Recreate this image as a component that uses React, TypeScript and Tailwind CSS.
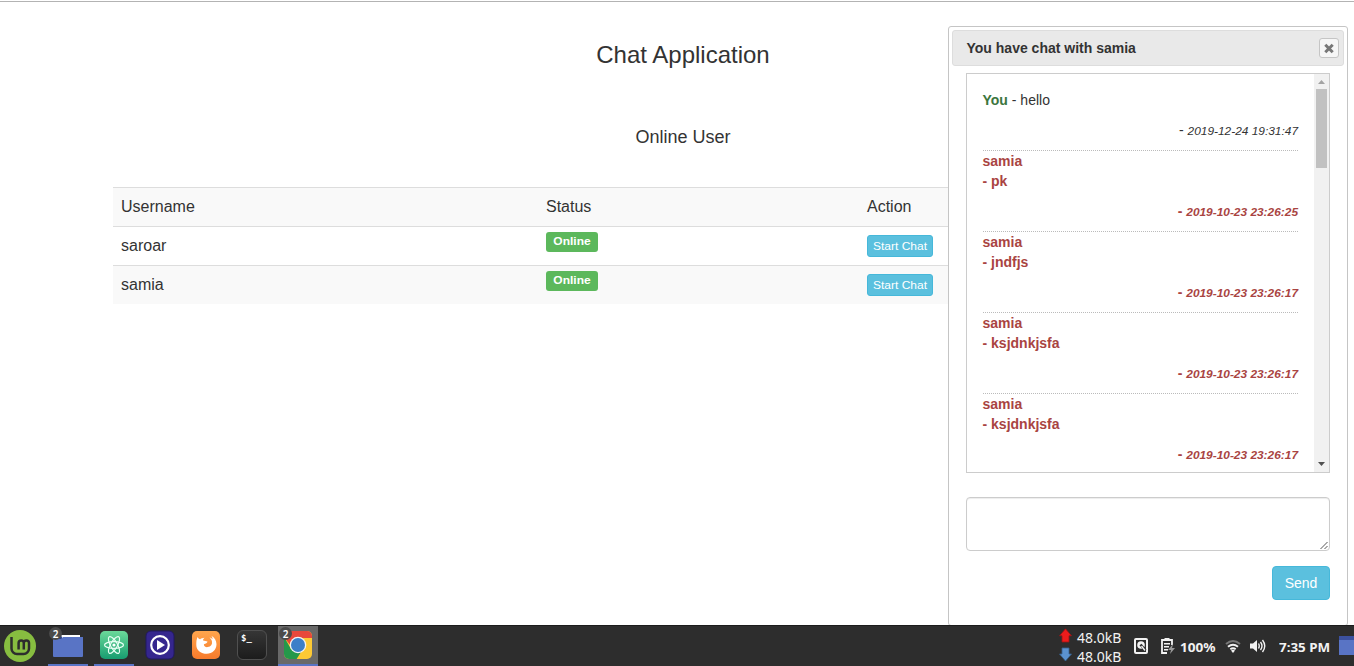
import React from "react";

type Message = { author: string; text: string; time: string; mine?: boolean };

const users = ["saroar", "samia"];

const messages: Message[] = [
  { author: "You", text: "hello", time: "2019-12-24 19:31:47", mine: true },
  { author: "samia", text: "pk", time: "2019-10-23 23:26:25" },
  { author: "samia", text: "jndfjs", time: "2019-10-23 23:26:17" },
  { author: "samia", text: "ksjdnkjsfa", time: "2019-10-23 23:26:17" },
  { author: "samia", text: "ksjdnkjsfa", time: "2019-10-23 23:26:17" },
];

function UserTable() {
  return (
    <table className="w-full table-fixed border-collapse bg-white text-left text-base leading-[22px]">
      <colgroup>
        <col className="w-[425px]" />
        <col className="w-[321px]" />
        <col />
      </colgroup>
      <tbody>
        <tr className="h-[39px] border-t border-[#ddd] bg-[#f9f9f9]">
          <td className="px-2">Username</td>
          <td className="px-2">Status</td>
          <td className="px-2">Action</td>
        </tr>
        {users.map((name) => (
          <tr key={name} className="h-[39px] border-t border-[#ddd] last:h-[38px] odd:bg-[#f9f9f9] even:bg-white">
            <td className="px-2">{name}</td>
            <td className="px-2 pt-[5px] align-top">
              <span className="flex h-5 w-[52px] justify-center rounded-[3px] bg-[#5cb85c] text-[12px] leading-[18px] font-bold text-white">
                <span className="inline-block scale-y-[0.91]">Online</span>
              </span>
            </td>
            <td className="px-2 pt-2 align-top">
              <button className="flex h-[22px] w-[66px] items-center justify-center rounded-[3px] border border-[#46b8da] bg-[#5bc0de] text-[12px] leading-[18px] whitespace-nowrap text-white">
                <span className="inline-block scale-y-[0.91]">Start Chat</span>
              </button>
            </td>
          </tr>
        ))}
      </tbody>
    </table>
  );
}

function MessageItem({ m }: { m: Message }) {
  return (
    <li
      className={
        m.mine
          ? "border-b border-dotted border-[#bbb] pb-[10px]"
          : "border-b border-dotted border-[#bbb] pb-[10px] font-bold text-[#a94442]"
      }
    >
      {m.mine ? (
        <p>
          <b className="text-[#3c763d]">{m.author}</b> - {m.text}
        </p>
      ) : (
        <>
          <p>{m.author}</p>
          <p>- {m.text}</p>
        </>
      )}
      <p className="mt-[10px] h-5 text-right">
        - <em className="inline-block scale-y-[0.91] text-[11.9px] leading-5">{m.time}</em>
      </p>
    </li>
  );
}

function ChatDialog() {
  return (
    <section className="absolute top-[26px] left-[948px] flex h-[600px] w-[400px] flex-col rounded-[3px] border border-[#c5c5c5] bg-white p-[3px] text-sm leading-5">
      <header className="flex h-9 shrink-0 items-center justify-between rounded-[3px] border border-[#ddd] bg-[#e9e9e9] pr-1 pl-[13.5px]">
        <h2 className="font-bold">You have chat with samia</h2>
        <button className="flex size-5 items-center justify-center rounded-[3px] border border-[#c5c5c5] bg-[#f6f6f6]">
          <svg width="12" height="12" viewBox="0 0 12 12">
            <path d="M2.300 2.800l7.400 7.400M9.700 2.800L2.300 10.200" stroke="#777" strokeWidth="3" />
          </svg>
        </button>
      </header>
      <div className="flex flex-col px-[14px] pt-[7px]">
        <div className="flex h-[400px] border border-[#ccc]">
          <ul className="flex-1 overflow-hidden py-4 pr-4 pl-[15.5px]">
            {messages.map((m, i) => (
              <MessageItem key={i} m={m} />
            ))}
          </ul>
          <div className="flex w-[15px] flex-col items-center justify-between bg-[#f1f1f1]">
            <div className="flex flex-col items-center">
              <svg width="15" height="15" viewBox="0 0 15 15">
                <path d="M4 10h7L7.5 6z" fill="#a3a3a3" />
              </svg>
              <div className="h-[79px] w-[11px] bg-[#c1c1c1]" />
            </div>
            <svg width="15" height="15" viewBox="0 0 15 15">
              <path d="M4 5h7L7.5 9z" fill="#505050" />
            </svg>
          </div>
        </div>
        <div className="mt-6 flex h-[54px] items-end justify-end rounded-[4px] border border-[#ccc] shadow-[inset_0_1px_1px_rgba(0,0,0,0.075)]">
          <svg width="9" height="9" viewBox="0 0 9 9">
            <path d="M0.5 8L7.5 1M4.5 8L7.5 5" stroke="#555" strokeWidth="1" />
          </svg>
        </div>
        <button className="mt-[15px] flex h-[34px] w-[58px] items-center justify-center self-end rounded-[4px] border border-[#46b8da] bg-[#5bc0de] text-white">
          Send
        </button>
      </div>
    </section>
  );
}

function CountBadge() {
  return (
    <span className="absolute top-[1px] left-[1px] flex size-[13px] items-center justify-center rounded-full bg-[#4b4b4b] font-['Noto_Sans'] text-[10px] leading-none font-semibold text-white">
      2
    </span>
  );
}

function MintLogo() {
  return (
    <svg width="32" height="32" viewBox="0 0 32 32">
      <circle cx="16" cy="16" r="16" fill="#87bd40" />
      <path
        d="M7.500 7v11.500a5.500 5.500 0 0 0 5.500 5.500h6.500a5.500 5.500 0 0 0 5.500-5.500V13a2.600 2.600 0 0 0-5.200 0v6.500M19.800 13a2.600 2.600 0 0 0-5.200 0v6.500"
        fill="none"
        stroke="#2d2d2d"
        strokeWidth="2.500"
      />
    </svg>
  );
}

function FolderIcon() {
  return (
    <svg className="mt-[1px]" width="30" height="24" viewBox="0 0 30 24">
      <path d="M0 2q0-2 2-2h5l3 3h18q2 0 2 2v17H0z" fill="#2f458c" />
      <path d="M8 1h19v5H10z" fill="#fff" />
      <path d="M0 5h8l2-2h20v19q0 1-1 1H1q-1 0-1-1z" fill="#5974c5" />
    </svg>
  );
}

function AtomIcon() {
  return (
    <svg width="30" height="30" viewBox="0 0 30 30">
      <defs>
        <linearGradient id="atom" x2="0" y2="1">
          <stop stopColor="#6bd99a" />
          <stop offset="1" stopColor="#179d70" />
        </linearGradient>
      </defs>
      <rect x="1" y="1" width="28" height="28" rx="5" fill="url(#atom)" />
      <g fill="none" stroke="#e8fff4" strokeWidth="1.200">
        <ellipse cx="15" cy="15" rx="3.400" ry="9.500" transform="rotate(-30 15 15)" />
        <ellipse cx="15" cy="15" rx="3.400" ry="9.500" transform="rotate(30 15 15)" />
        <ellipse cx="15" cy="15" rx="3.400" ry="9.500" transform="rotate(90 15 15)" />
      </g>
      <circle cx="15" cy="15" r="1.600" fill="#fff" />
    </svg>
  );
}

function PlayerIcon() {
  return (
    <svg width="30" height="30" viewBox="0 0 30 30">
      <rect x="1" y="1" width="28" height="28" rx="5" fill="#35268e" stroke="#211861" />
      <circle cx="15" cy="15" r="8.800" fill="none" stroke="#fff" strokeWidth="2.200" />
      <path d="M12 10v10l8-5z" fill="#fff" />
    </svg>
  );
}

function FirefoxIcon() {
  return (
    <svg width="30" height="30" viewBox="0 0 30 30">
      <defs>
        <linearGradient id="fox" x2="0" y2="1">
          <stop stopColor="#ffa64d" />
          <stop offset="1" stopColor="#f77b2c" />
        </linearGradient>
      </defs>
      <rect x="1" y="1" width="28" height="28" rx="5" fill="url(#fox)" />
      <path
        d="M6.500 7c.6 1.200 1.500 1.900 2.700 2.200 1-.9 2.500-1.300 4.300-1.400-1 .9-1.500 1.800-1.400 2.800l4.400.9c-.3 1.500-1.700 2.300-3.600 2.700-.2 1.800 1.500 3.200 3.800 2.900 3.200-.4 4.700-2.600 4.300-5.400-.2-1.700-1-3-2.500-4.200 1.600.3 2.500 1 3 1.800.1-1.400-.4-2.600-1.300-3.600 3.400 1.600 5.300 4.900 5.300 8.600 0 5.500-4.200 9.500-9.700 9.500S5.300 20.600 5.300 15c0-2.900.1-5.500 1.200-8z"
        fill="#fff"
      />
    </svg>
  );
}

function TerminalIcon() {
  return (
    <div className="flex size-[30px] rounded-[6px] border border-[#505050] bg-linear-to-b from-[#363636] to-[#1c1c1c] pt-[3px] pl-[3px] font-['DejaVu_Sans_Mono'] text-[9px] leading-[9px] font-bold text-white">
      <span>$</span>
      <span>_</span>
    </div>
  );
}

function ChromeIcon() {
  return (
    <svg width="30" height="30" viewBox="0 0 30 30">
      <defs>
        <clipPath id="tile">
          <rect x="1" y="1" width="28" height="28" rx="5" />
        </clipPath>
      </defs>
      <g clipPath="url(#tile)">
        <rect width="30" height="30" fill="#fcc934" />
        <path d="M0 5L8 19l10 3-5 8H0z" fill="#24984a" />
        <path d="M0 0h30v8H15l-7 8L0 6z" fill="#e8483b" />
      </g>
      <circle cx="15" cy="15" r="8.300" fill="#f4f4f4" />
      <circle cx="15" cy="15" r="7" fill="#3c7fc8" />
    </svg>
  );
}

function TaskSlot({ children, open, active, badge }: { children: React.ReactNode; open?: boolean; active?: boolean; badge?: boolean }) {
  return (
    <div
      className={
        active
          ? "relative flex h-full w-10 items-center justify-center border-b-2 border-[#5974c5] bg-[#696969]"
          : open
            ? "relative flex h-full w-10 items-center justify-center border-b-2 border-[#5974c5]"
            : "relative flex h-full w-10 items-center justify-center border-b-2 border-transparent"
      }
    >
      {children}
      {badge && <CountBadge />}
    </div>
  );
}

function NetArrow({ up }: { up?: boolean }) {
  return (
    <svg width="13" height="15" viewBox="0 0 13 15">
      {up ? (
        <path d="M6.500 .8l6 7H10V14H3V7.800H.5z" fill="#ec1c1c" stroke="#9c1515" strokeWidth=".8" />
      ) : (
        <path d="M6.500 14l6-7H10V1H3v6H.5z" fill="#5b92cf" stroke="#35618f" strokeWidth=".8" />
      )}
    </svg>
  );
}

function Tray() {
  return (
    <div className="ml-auto flex h-full items-center font-['Noto_Sans'] text-[13px] font-bold text-[#f2f2f2]">
      <div className="flex h-full w-[75px] flex-col text-[14px] leading-[19px] font-normal">
        <div className="flex h-[19px] gap-[5px] pt-[2px]">
          <NetArrow up />
          <span>48.0kB</span>
        </div>
        <div className="flex h-[19px] gap-[5px] pt-[2px]">
          <NetArrow />
          <span>48.0kB</span>
        </div>
      </div>
      <svg width="14" height="16" viewBox="0 0 14 16">
        <rect x="1" y="1" width="12" height="14" rx="1" fill="none" stroke="#f2f2f2" strokeWidth="2" />
        <circle cx="7" cy="7" r="3.800" fill="#f2f2f2" />
        <path d="M6.500 6.500l5 6" stroke="#2d2d2d" strokeWidth="2.600" />
        <path d="M7.500 8l3.500 4.500" stroke="#f2f2f2" strokeWidth="1.300" />
      </svg>
      <svg className="ml-[13px]" width="14" height="16" viewBox="0 0 14 16">
        <path d="M6 15H1V2h10v5" fill="none" stroke="#f2f2f2" strokeWidth="1.800" />
        <path d="M3.500 0h5v3h-5zM3 5h6v1.500H3zM3 8h5v1.500H3zM3 11h4v1.500H3z" fill="#f2f2f2" />
        <path d="M12 6L7 12h3l-1 4 5-6h-3z" fill="#999" />
      </svg>
      <span className="mt-[3px] ml-[5px] w-[37px] scale-y-[0.91] text-[13.600px]">100%</span>
      <svg className="ml-[8px]" width="16" height="14" viewBox="0 0 16 14">
        <g fill="none" strokeWidth="2">
          <path d="M1 5q7-6 14 0" stroke="#777" />
          <path d="M3 7.700q5-4 10 0M5.300 10.200q2.700-2 5.400 0" stroke="#f2f2f2" />
        </g>
        <path d="M6 11.500q2-1.500 4 0l-2 2.500z" fill="#f2f2f2" />
      </svg>
      <svg className="ml-[9px]" width="16" height="14" viewBox="0 0 16 14">
        <path d="M0 4.500h3L7 1v12L3 9.500H0z" fill="#f2f2f2" />
        <path d="M8.500 4.500q1.500 2.500 0 5M10.500 3q3 4 0 8M12.500 1q4.500 6 0 12" fill="none" stroke="#f2f2f2" strokeWidth="1.400" />
      </svg>
      <span className="mt-[3px] ml-[13px] w-[52px] scale-y-[0.91] text-[13.400px] whitespace-nowrap">7:35 PM</span>
      <div className="mb-[1px] ml-[8px] h-[19px] w-[15px] border-t-[4px] border-[#3c519f] bg-[#5974c5]" />
    </div>
  );
}

export default function App() {
  return (
    <div className="relative flex h-[666px] w-[1354px] flex-col overflow-hidden bg-white font-['Liberation_Sans',Arial,sans-serif] text-[#333]">
      <main className="mt-[1px] flex-1 border-t border-[#b3b3b3] pr-[101px] pl-[113px]">
        <h1 className="pt-[40px] text-center text-2xl leading-[26px]">Chat Application</h1>
        <h2 className="mt-[59px] mb-[40px] text-center text-lg leading-5">Online User</h2>
        <UserTable />
      </main>
      <ChatDialog />
      <footer className="relative flex h-[41px] shrink-0 items-center border-t border-[#1c1c1c] bg-[#2d2d2d]">
        <div className="mr-2 flex w-10 justify-center">
          <MintLogo />
        </div>
        <div className="flex h-full gap-[6px]">
          <TaskSlot open badge>
            <FolderIcon />
          </TaskSlot>
          <TaskSlot open>
            <AtomIcon />
          </TaskSlot>
          <TaskSlot>
            <PlayerIcon />
          </TaskSlot>
          <TaskSlot>
            <FirefoxIcon />
          </TaskSlot>
          <TaskSlot>
            <TerminalIcon />
          </TaskSlot>
          <TaskSlot active badge>
            <ChromeIcon />
          </TaskSlot>
        </div>
        <Tray />
      </footer>
    </div>
  );
}
